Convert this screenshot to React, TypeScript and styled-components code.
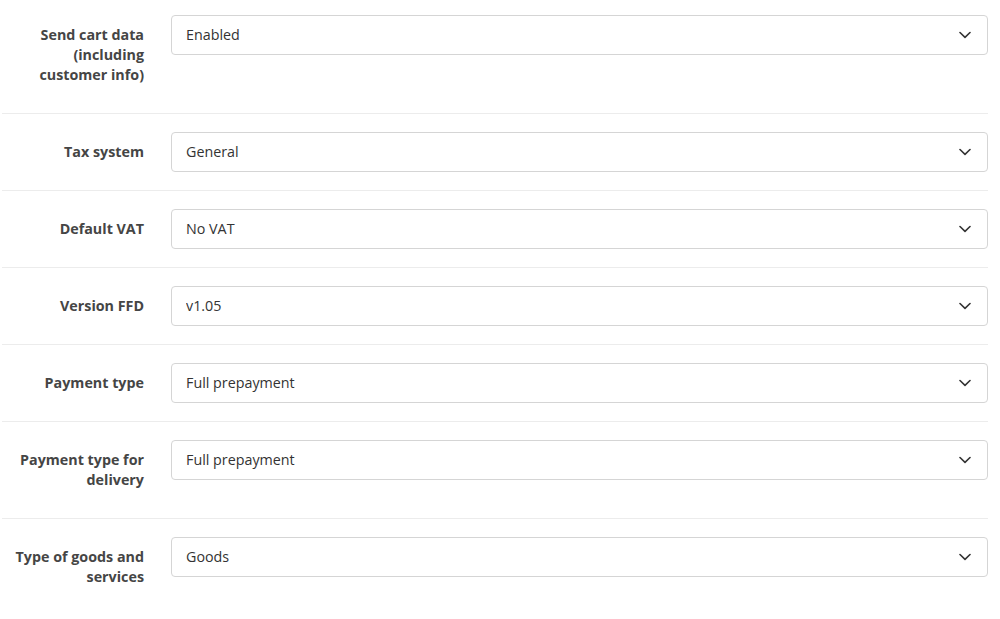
import React from 'react';
import styled, { createGlobalStyle } from 'styled-components';

interface Setting {
  label: string;
  value: string;
}

const settings: Setting[] = [
  { label: 'Send cart data (including customer info)', value: 'Enabled' },
  { label: 'Tax system', value: 'General' },
  { label: 'Default VAT', value: 'No VAT' },
  { label: 'Version FFD', value: 'v1.05' },
  { label: 'Payment type', value: 'Full prepayment' },
  { label: 'Payment type for delivery', value: 'Full prepayment' },
  { label: 'Type of goods and services', value: 'Goods' },
];

const GlobalStyle = createGlobalStyle`
  html, body {
    margin: 0;
    padding: 0;
    background: #fff;
  }
  body {
    font-family: "Open Sans", "Liberation Sans", sans-serif;
    font-size: 14px;
    color: #333;
  }
`;

const Form = styled.div`
  padding: 0 12px 0 2px;
`;

const Row = styled.div<{ $first?: boolean; $last?: boolean }>`
  display: grid;
  grid-template-columns: 142px 1fr;
  column-gap: 27px;
  align-items: start;
  padding: ${p => (p.$first ? '15px' : '18px')} 0 18px;
  border-bottom: ${p => (p.$last ? 'none' : '1px solid #ececec')};
`;

const Label = styled.label`
  padding: 10px 0 10px 8px;
  text-align: right;
  font-weight: 700;
  font-size: 14.3px;
  line-height: 20px;
  color: #454545;
`;

const SelectWrap = styled.div`
  position: relative;
`;

const Select = styled.select`
  appearance: none;
  -webkit-appearance: none;
  display: block;
  width: 100%;
  height: 40px;
  margin: 0;
  padding: 0 40px 1px 14px;
  border: 1px solid #d5d5d5;
  border-radius: 4px;
  background: #fff;
  font-family: "Open Sans", "Liberation Sans", sans-serif;
  font-size: 14.3px;
  color: #333;
  outline: none;
`;

const Chevron = styled.svg`
  position: absolute;
  right: 17px;
  top: 16px;
  pointer-events: none;
`;

const ChevronIcon = () => (
  <Chevron width="12" height="8" viewBox="0 0 12 8" fill="none">
    <path d="M1 1.5L6 6.3L11 1.5" stroke="#333" strokeWidth="1.6" strokeLinecap="round" strokeLinejoin="round" />
  </Chevron>
);

export default function App() {
  return (
    <>
      <GlobalStyle />
      <Form>
        {settings.map((s, i) => (
          <Row key={s.label} $first={i === 0} $last={i === settings.length - 1}>
            <Label>{s.label}</Label>
            <SelectWrap>
              <Select defaultValue={s.value}>
                <option value={s.value}>{s.value}</option>
              </Select>
              <ChevronIcon />
            </SelectWrap>
          </Row>
        ))}
      </Form>
    </>
  );
}
